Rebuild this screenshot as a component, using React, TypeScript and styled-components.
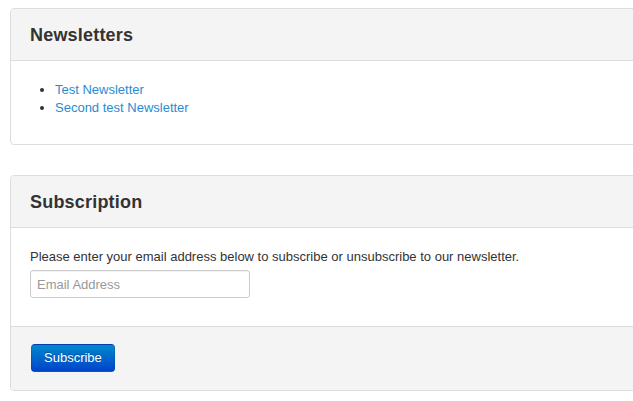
import React from "react";
import styled, { createGlobalStyle } from "styled-components";

const Global = createGlobalStyle`
  html, body { margin: 0; padding: 0; background: #fff; overflow: hidden; }
  body { font-family: "Liberation Sans", Arial, sans-serif; font-size: 13px; line-height: 18px; color: #333; }
`;

const Page = styled.div`
  padding: 8px 0 0 10px;
  width: 680px;
`;

const Panel = styled.section`
  border: 1px solid #ddd;
  border-radius: 4px;
  background: #fff;
  margin-bottom: 30px;
  overflow: hidden;
`;

const Header = styled.div`
  height: 51px;
  display: flex;
  align-items: center;
  padding: 0 19px;
  background: #f4f4f4;
  border-bottom: 1px solid #ddd;
`;

const Title = styled.h2`
  margin: 0;
  font-size: 18px;
  font-weight: bold;
  color: #333;
  line-height: 20px;
  letter-spacing: 0.2px;
`;

const Body = styled.div`
  padding: 20px 19px 20px;
`;

const List = styled.ul`
  margin: 0 0 7px 25px;
  padding: 0;
`;

const Link = styled.a`
  color: #2a8bd3;
  text-decoration: none;
`;

const Text = styled.p`
  margin: 0 0 4px;
`;

const Input = styled.input`
  box-sizing: border-box;
  width: 220px;
  height: 28px;
  padding: 4px 6px;
  border: 1px solid #ccc;
  border-radius: 3px;
  font-family: "Liberation Sans", Arial, sans-serif;
  font-size: 13px;
  color: #555;
  margin: 0 0 8px;
  box-shadow: inset 0 1px 1px rgba(0,0,0,0.05);
  &::placeholder { color: #999; }
`;

const Actions = styled.div`
  padding: 17px 20px 18px;
  background: #f4f4f4;
  border-top: 1px solid #ddd;
`;

const Button = styled.button`
  box-sizing: border-box;
  height: 28px;
  padding: 4px 12px;
  font-family: "Liberation Sans", Arial, sans-serif;
  font-size: 13px;
  line-height: 18px;
  color: #fff;
  text-shadow: 0 -1px 0 rgba(0,0,0,0.25);
  background: linear-gradient(to bottom, #0088cc, #0044cc);
  border: 1px solid #0044aa;
  border-color: rgba(0,0,0,0.1) rgba(0,0,0,0.1) rgba(0,0,0,0.25);
  border-radius: 4px;
  cursor: pointer;
`;

export default function App() {
  return (
    <Page>
      <Global />
      <Panel>
        <Header><Title>Newsletters</Title></Header>
        <Body>
          <List>
            <li><Link href="#">Test Newsletter</Link></li>
            <li><Link href="#">Second test Newsletter</Link></li>
          </List>
        </Body>
      </Panel>
      <Panel>
        <Header><Title>Subscription</Title></Header>
        <Body>
          <Text>Please enter your email address below to subscribe or unsubscribe to our newsletter.</Text>
          <Input type="text" placeholder="Email Address" />
        </Body>
        <Actions>
          <Button>Subscribe</Button>
        </Actions>
      </Panel>
    </Page>
  );
}
